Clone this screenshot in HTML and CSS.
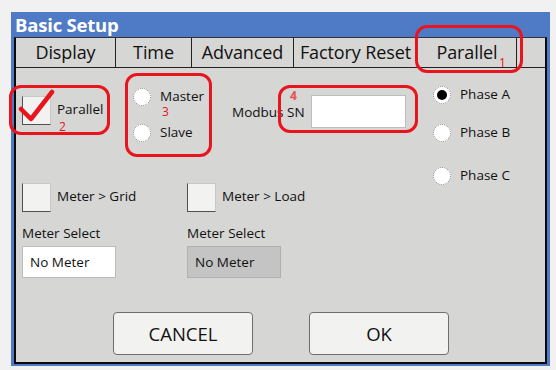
FILE: index.html
```html
<!DOCTYPE html>
<html>
<head>
<meta charset="utf-8">
<link rel="stylesheet" href="styles.css">
</head>
<body>
<div class="window">
  <div class="titlebar">Basic Setup</div>
  <div class="frame">
    <div class="tabs">
      <div class="tab t-display">Display</div>
      <div class="tab t-time">Time</div>
      <div class="tab t-adv">Advanced</div>
      <div class="tab t-factory">Factory Reset</div>
      <div class="tab t-parallel">Parallel</div>
      <div class="tab-rest"></div>
    </div>
    <div class="content">
      <div class="top">
        <div class="chk-parallel">
          <span class="box"></span><span class="chk-text">Parallel</span>
        </div>
        <div class="radios">
          <div class="radio-row"><span class="circle"></span><span>Master</span></div>
          <div class="radio-row"><span class="circle"></span><span>Slave</span></div>
        </div>
        <div class="modbus">
          <span class="mb-label">Modbus SN</span>
          <span class="mb-input"></span>
        </div>
        <div class="phases">
          <div class="radio-row ph-a"><span class="circle on"></span><span>Phase A</span></div>
          <div class="radio-row ph-b"><span class="circle"></span><span>Phase B</span></div>
          <div class="radio-row"><span class="circle"></span><span>Phase C</span></div>
        </div>
      </div>
      <div class="meters">
        <div class="meter-col">
          <div class="chk"><span class="box"></span><span>Meter &gt; Grid</span></div>
          <div class="ms-label">Meter Select</div>
          <div class="select">No Meter</div>
        </div>
        <div class="meter-col">
          <div class="chk"><span class="box"></span><span>Meter &gt; Load</span></div>
          <div class="ms-label">Meter Select</div>
          <div class="select disabled">No Meter</div>
        </div>
      </div>
      <div class="buttons">
        <div class="btn">CANCEL</div>
        <div class="btn">OK</div>
      </div>
    </div>
  </div>
</div>

<div class="mark m1"></div><span class="num n1">1</span>
<div class="mark m2"></div><span class="num n2">2</span>
<div class="mark m3"></div><span class="num n3">3</span>
<div class="mark m4"></div><span class="num n4">4</span>
<svg class="check" width="40" height="36" viewBox="0 0 40 36">
  <path d="M3 20 L13 30 L34 3" fill="none" stroke="#e8141e" stroke-width="4.5" stroke-linecap="round" stroke-linejoin="round"/>
</svg>
</body>
</html>
```
FILE: styles.css
```css
html, body {
  margin: 0;
  padding: 0;
}
body {
  background: #f1f1f1;
  width: 556px;
  height: 370px;
  overflow: hidden;
  position: relative;
  font-family: "Open Sans", "Noto Sans", sans-serif;
  color: #111;
}
.window {
  margin: 12px 0 0 11px;
  width: 539px;
  height: 354px;
  background: #4f7bc6;
  padding: 0 3px 2px 3px;
  box-sizing: border-box;
  display: flex;
  flex-direction: column;
}
.titlebar {
  height: 25px;
  color: #fff;
  font-weight: 700;
  font-size: 18.5px;
  line-height: 25px;
  padding-left: 1px;
  letter-spacing: -0.2px;
}
.frame {
  flex: 1;
  border: 2px solid #0a0a0a;
  border-top: 1px solid #333;
  background: #d6d6d5;
  display: flex;
  flex-direction: column;
}
.tabs {
  display: flex;
  height: 29px;
  border-bottom: 1px solid #222;
}
.tab {
  border-right: 1px solid #222;
  font-size: 18px;
  line-height: 29px;
  text-align: center;
  background: #d6d6d5;
  letter-spacing: -0.1px;
}
.t-display { width: 99px; }
.t-time { width: 75px; }
.t-adv { width: 101px; }
.t-factory { width: 123px; }
.t-parallel { width: 98px; }
.tab-rest { flex: 1; }

.content {
  flex: 1;
  display: flex;
  flex-direction: column;
  font-size: 13.5px;
}
.top {
  display: flex;
  height: 115px;
}
.box {
  width: 27px;
  height: 27px;
  background: #f2f2f1;
  border: 1px solid #c8c8c8;
  border-left-color: #505050;
  border-bottom-color: #505050;
  flex: none;
}
.chk-parallel {
  width: 111px;
  margin: 28px 0 0 6px;
  display: flex;
  align-items: center;
  gap: 6px;
  height: 29px;
}
.chk-text {
  line-height: 16px;
  margin-top: -4px;
}
.radios {
  width: 99px;
  margin-top: 20px;
  display: flex;
  flex-direction: column;
  gap: 18px;
}
.radio-row {
  display: flex;
  align-items: center;
  gap: 9px;
  height: 18px;
  line-height: 16px;
}
.radio-row span:last-child {
  margin-top: -3px;
}
.circle {
  width: 16px;
  height: 16px;
  border-radius: 50%;
  background: #fff;
  border: 1px dotted #888;
  flex: none;
  position: relative;
}
.circle.on::after {
  content: "";
  position: absolute;
  left: 3px;
  top: 3px;
  width: 10px;
  height: 10px;
  border-radius: 50%;
  background: #000;
}
.modbus {
  width: 201px;
  margin-top: 27px;
  display: flex;
  align-items: center;
  height: 33px;
}
.mb-label {
  width: 79px;
}
.mb-input {
  width: 93px;
  height: 31px;
  background: #fff;
  border: 1px solid #bdbdbd;
}
.phases {
  margin-top: 18px;
  display: flex;
  flex-direction: column;
}
.ph-a { margin-bottom: 20px; }
.ph-b { margin-bottom: 25px; }

.meters {
  display: flex;
  padding-left: 6px;
}
.meter-col {
  width: 165px;
  display: flex;
  flex-direction: column;
}
.chk {
  display: flex;
  align-items: center;
  gap: 6px;
  height: 29px;
}
.chk span:last-child {
  margin-top: -4px;
}
.ms-label {
  margin-top: 10px;
  height: 22px;
  line-height: 22px;
}
.select {
  margin-top: 2px;
  width: 92px;
  height: 30px;
  line-height: 30px;
  box-sizing: content-box;
  background: #fff;
  border: 1px solid #bcbcbc;
  text-indent: 7px;
}
.select.disabled {
  background: #c4c4c4;
  border-color: #b0b0b0;
}
.buttons {
  display: flex;
  gap: 56px;
  padding-left: 97px;
  margin-top: 34px;
}
.btn {
  width: 138px;
  height: 41px;
  line-height: 41px;
  text-align: center;
  background: #f2f2f1;
  border: 1px solid #6e6e6e;
  border-radius: 4px;
  font-size: 18.5px;
}

.mark {
  position: absolute;
  border: 3px solid #e8141e;
  border-radius: 12px;
  box-sizing: border-box;
}
.m1 { left: 415px; top: 25px; width: 108px; height: 48px; }
.m2 { left: 9px; top: 85px; width: 101px; height: 50px; }
.m3 { left: 125px; top: 73px; width: 87px; height: 84px; }
.m4 { left: 278px; top: 85px; width: 140px; height: 48px; }
.num {
  position: absolute;
  color: #e8141e;
  font-size: 12px;
  line-height: 11px;
  font-family: "Open Sans", sans-serif;
}
.n1 { left: 499px; top: 57px; }
.n2 { left: 59px; top: 121px; }
.n3 { left: 162px; top: 106px; }
.n4 { left: 290px; top: 90px; font-weight: 700; color: #e85050; }
.check {
  position: absolute;
  left: 18px;
  top: 89px;
}
```
